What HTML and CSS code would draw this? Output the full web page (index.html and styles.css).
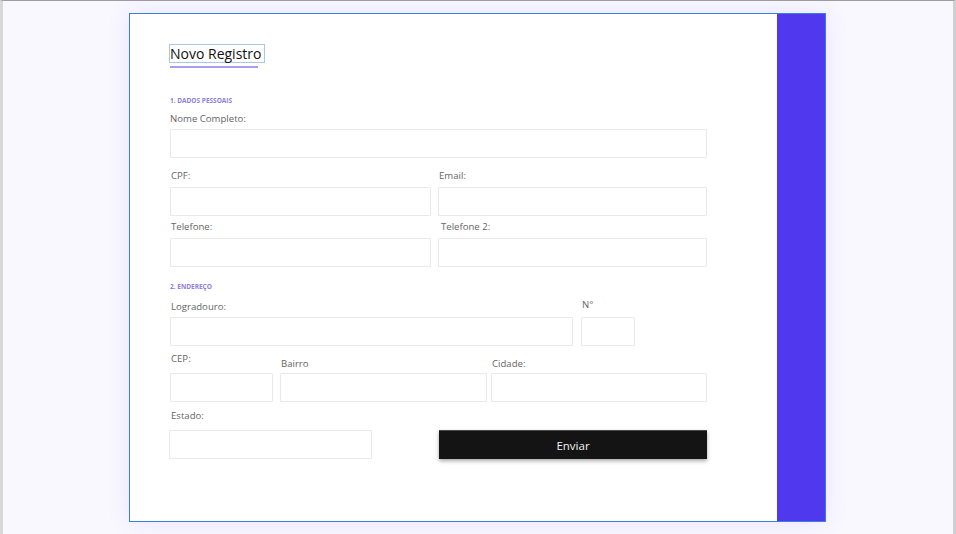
FILE: index.html
```html
<!DOCTYPE html>
<html lang="pt">
<head>
<meta charset="utf-8">
<title>Novo Registro</title>
<link rel="stylesheet" href="styles.css">
</head>
<body>
<div class="window">
  <div class="card">
    <form class="form">
      <div class="title">Novo Registro</div>
      <div class="underline"></div>

      <div class="section s1">1. DADOS PESSOAIS</div>
      <div class="field">
        <label class="lbl l-nome">Nome Completo:</label>
        <div class="inp w-full"></div>
      </div>

      <div class="row r2">
        <div class="field">
          <label class="lbl">CPF:</label>
          <div class="inp w-half1"></div>
        </div>
        <div class="field">
          <label class="lbl">Email:</label>
          <div class="inp w-half2"></div>
        </div>
      </div>

      <div class="row r3">
        <div class="field">
          <label class="lbl">Telefone:</label>
          <div class="inp w-half1"></div>
        </div>
        <div class="field">
          <label class="lbl shift2">Telefone 2:</label>
          <div class="inp w-half2"></div>
        </div>
      </div>

      <div class="section s2">2. ENDEREÇO</div>
      <div class="row r4">
        <div class="field">
          <label class="lbl l-logr">Logradouro:</label>
          <div class="inp w-logr"></div>
        </div>
        <div class="field">
          <label class="lbl l-num">N°</label>
          <div class="inp w-num"></div>
        </div>
      </div>

      <div class="row r5">
        <div class="field">
          <label class="lbl l-cep">CEP:</label>
          <div class="inp w-cep"></div>
        </div>
        <div class="field">
          <label class="lbl l-low">Bairro</label>
          <div class="inp w-bairro"></div>
        </div>
        <div class="field">
          <label class="lbl l-low">Cidade:</label>
          <div class="inp w-cidade"></div>
        </div>
      </div>

      <div class="row r6">
        <div class="field">
          <label class="lbl">Estado:</label>
          <div class="inp w-estado"></div>
        </div>
        <button type="button" class="btn">Enviar</button>
      </div>
    </form>
    <div class="aside"></div>
  </div>
</div>
</body>
</html>
```

FILE: styles.css
```css
* { box-sizing: border-box; }

html, body {
  margin: 0;
  padding: 0;
  height: 100%;
}

body {
  background: #f9f8ff;
  font-family: "Open Sans", "Noto Sans", sans-serif;
  overflow: hidden;
}

.window {
  height: 534px;
  width: 956px;
  border-top: 1px solid #9d9d9d;
  border-left: 3px solid #d8d8d8;
  border-right: 3px solid #cfcfcf;
  padding-top: 12px;
  padding-left: 126px;
}

.card {
  width: 697px;
  height: 509px;
  border: 1px solid #3a7ee0;
  background: #fff;
  display: flex;
  box-shadow: 0 0 22px rgba(110, 90, 255, 0.12);
}

.form {
  flex: 0 0 647px;
  padding: 30px 0 0 39px;
  display: flex;
  flex-direction: column;
  align-items: flex-start;
}

.aside {
  flex: 1;
  background: #4f38ee;
}

.title {
  font-size: 14px;
  line-height: 17px;
  color: #111;
  border: 1px solid #adc6e6;
  padding: 0 3px 0 0;
}

.underline {
  width: 88px;
  height: 2px;
  margin-left: 1px;
  margin-top: 3px;
  background: #ab9cec;
}

.section {
  font-size: 6.5px;
  line-height: 8px;
  font-weight: 700;
  color: #8e80dc;
  margin-left: 1px;
}

.s1 { margin-top: 29px; }
.s2 { margin-top: 16px; }

.field {
  display: flex;
  flex-direction: column;
}

.lbl {
  font-size: 9.6px;
  line-height: 14px;
  color: #666;
  margin-left: 1px;
  margin-bottom: 4px;
}

.l-nome { margin-top: 7px; margin-bottom: 3px; }
.shift2 { margin-left: 3px; }

.inp {
  height: 29px;
  border: 1px solid #e9e9e9;
  border-radius: 1px;
  background: #fff;
}

.row {
  display: flex;
  align-items: flex-end;
}

.r2 { margin-top: 11px; margin-left: 1px; gap: 7px; }
.r3 { margin-top: 4px; margin-left: 1px; gap: 7px; }
.r4 { margin-top: 7px; margin-left: 1px; gap: 8px; }
.r5 { margin-top: 6px; margin-left: 1px; }
.r6 { margin-top: 7px; }

.w-full { width: 537px; margin-left: 1px; }
.w-half1 { width: 261px; }
.w-half2 { width: 269px; }
.w-logr { width: 403px; }
.w-num { width: 54px; }
.l-logr { margin-bottom: 3px; }
.l-num { margin-bottom: 5px; }

.l-cep { margin-bottom: 7px; }
.l-low { margin-bottom: 2px; }
.w-cep { width: 103px; }
.r5 .field:nth-child(2) { margin-left: 7px; }
.r5 .field:nth-child(3) { margin-left: 4px; }
.w-bairro { width: 207px; }
.w-cidade { width: 216px; }

.r6 .lbl { margin-left: 2px; margin-bottom: 7px; }
.w-estado { width: 203px; }

.btn {
  margin-left: 67px;
  width: 268px;
  height: 29px;
  border: 0;
  border-top: 1px solid #4a4a4a;
  background: #141414;
  color: #f2f2f2;
  font-family: "Open Sans", "Noto Sans", sans-serif;
  font-size: 11.5px;
  box-shadow: 0 2px 4px rgba(0, 0, 0, 0.35);
  padding: 0;
}
```
